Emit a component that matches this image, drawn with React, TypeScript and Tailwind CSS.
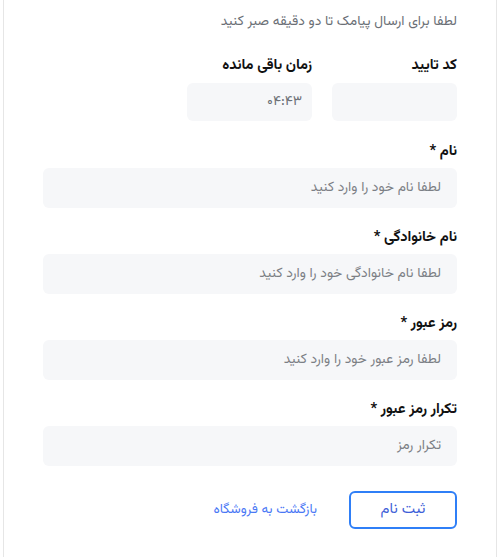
import React from "react";

const font = { fontFamily: '"Vazirmatn", "Noto Sans Arabic", "Noto Naskh Arabic", "DejaVu Sans", sans-serif' };

function Field({ label, placeholder }: { label: string; placeholder: string }) {
  return (
    <div className="flex flex-col">
      <label className="text-[14.6px] font-bold leading-[24px] text-[#111]">{label}</label>
      <div className="mt-1 flex h-[40px] items-center rounded-[6px] bg-[#f6f7f9] px-4 text-[13.85px] text-[#7c7f85]">
        {placeholder}
      </div>
    </div>
  );
}

export default function App() {
  return (
    <div dir="rtl" className="h-[557px] w-[497px] overflow-hidden bg-white" style={font}>
      <div className="ml-[3px] h-full w-[494px] border-x border-[#e6e6e6] px-[39px] pt-[11px]">
        <p className="text-[13.8px] leading-[22px] text-[#6b6f76]">لطفا برای ارسال پیامک تا دو دقیقه صبر کنید</p>
        <div className="mt-[21px] flex gap-[20px]">
          <div className="flex w-[125px] flex-col">
            <span className="text-[14.6px] font-bold leading-[24px] text-[#111]">کد تایید</span>
            <div className="mt-[5px] h-[38px] rounded-[6px] bg-[#f6f7f9]" />
          </div>
          <div className="flex w-[125px] flex-col">
            <span className="text-[14.6px] font-bold leading-[24px] text-[#111]">زمان باقی مانده</span>
            <div className="mt-[5px] flex h-[38px] items-center rounded-[6px] bg-[#f6f7f9] px-[10px] text-[14px] text-[#6b6f76]">
              ۰۴:۴۳
            </div>
          </div>
        </div>
        <div className="mt-[19px] flex flex-col gap-[18px]">
          <Field label="نام *" placeholder="لطفا نام خود را وارد کنید" />
          <Field label="نام خانوادگی *" placeholder="لطفا نام خانوادگی خود را وارد کنید" />
          <Field label="رمز عبور *" placeholder="لطفا رمز عبور خود را وارد کنید" />
          <Field label="تکرار رمز عبور *" placeholder="تکرار رمز" />
        </div>
        <div className="mt-[25px] flex items-center gap-[32px]">
          <button className="flex h-[38px] w-[108px] items-center justify-center rounded-[6px] border-2 border-[#2f7ff7] text-[15px] text-[#3f5fd8]">
            ثبت نام
          </button>
          <a className="text-[13.5px] text-[#4a78f5]">بازگشت به فروشگاه</a>
        </div>
      </div>
    </div>
  );
}
